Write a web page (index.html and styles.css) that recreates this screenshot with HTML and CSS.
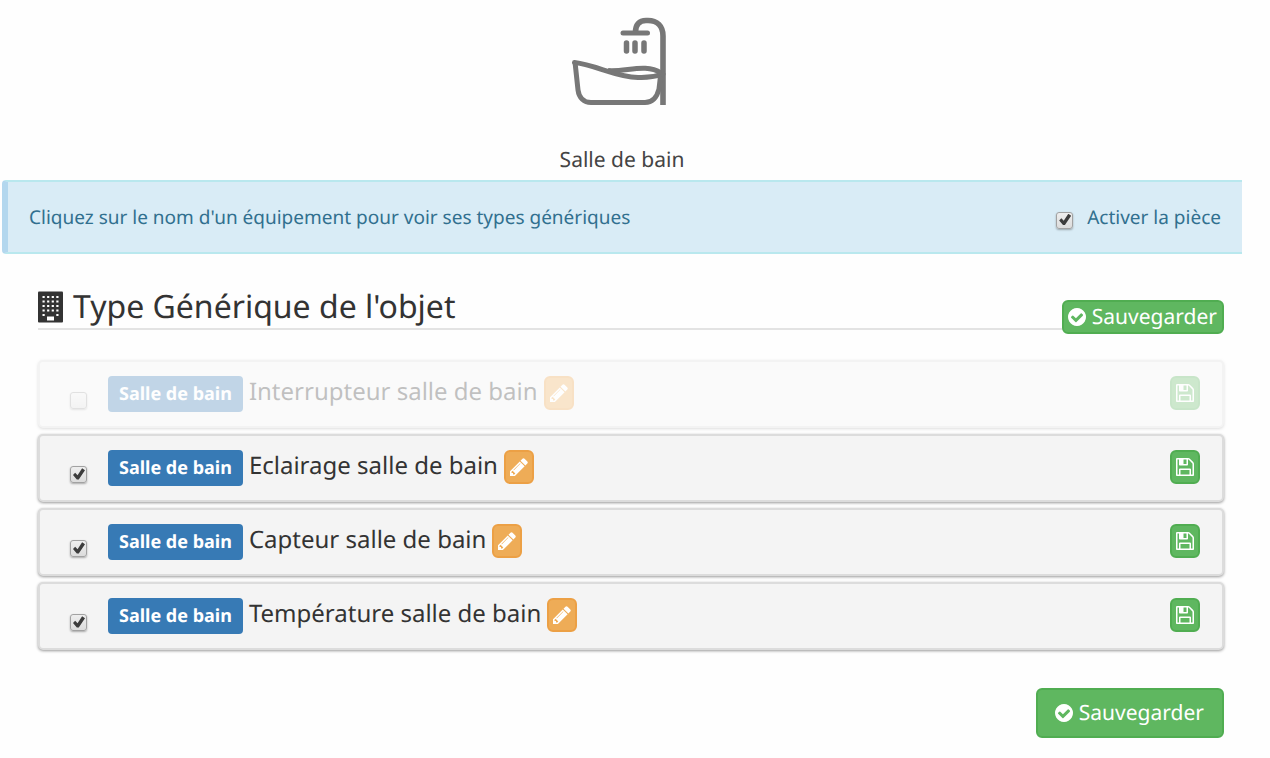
FILE: index.html
```html
<!DOCTYPE html>
<html lang="fr">
<head>
<meta charset="utf-8">
<title>Salle de bain</title>
<link rel="stylesheet" href="styles.css">
</head>
<body>
<svg class="sprite" aria-hidden="true">
  <symbol id="pencil" viewBox="0 128 1536 1536"><path d="M363 1536l91-91-235-235-91 91v107h128v128h107zM886 608q0-22-22-22-10 0-17 7l-542 542q-7 7-7 17 0 22 22 22 10 0 17-7l542-542q7-7 7-17zM832 416l416 416-832 832H0v-416zM1515 512q0 53-37 90l-166 166-416-416 166-165q36-38 90-38 53 0 91 38l235 234q37 39 37 91z"/></symbol>
  <symbol id="floppy" viewBox="0 128 1536 1536"><path d="M384 1536h768v-384H384v384zm896 0h128V640q0-14-10-38.500T1378 567l-281-281q-10-10-34-20t-39-10v416q0 40-28 68t-68 28H352q-40 0-68-28t-28-68V256H128v1280h128v-416q0-40 28-68t68-28h832q40 0 68 28t28 68v416zM896 608V288q0-13-9.500-22.500T864 256H672q-13 0-22.500 9.500T640 288v320q0 13 9.500 22.500T672 640h192q13 0 22.500-9.500T896 608zm640 32v928q0 40-28 68t-68 28H96q-40 0-68-28t-28-68V224q0-40 28-68t68-28h928q40 0 88 20t76 48l280 280q28 28 48 76t20 88z"/></symbol>
  <symbol id="check" viewBox="0 128 1536 1536"><path d="M1284 734q0-28-18-46l-91-90q-19-19-45-19t-45 19l-408 407-226-226q-19-19-45-19t-45 19l-91 90q-18 18-18 46 0 27 18 45l362 362q19 19 45 19 27 0 46-19l543-543q18-18 18-45zm252 162q0 209-103 385.500T1153.500 1561 768 1664t-385.500-103T103 1281.500 0 896t103-385.500T382.500 231 768 128t385.500 103T1433 510.500 1536 896z"/></symbol>
</svg>
<main class="page">
  <header class="room">
    <svg class="room-icon" viewBox="0 0 94 88" fill="none" stroke="#777" stroke-width="5" aria-hidden="true">
      <path d="M91 88V19C91 9 85 3.500 76 3.500H74C67 3.500 63.500 8 63.500 15" stroke-width="5.600"/>
      <path d="M51 16H75.500" stroke-linecap="round"/>
      <path d="M54.500 26v8M63 26v8M72 26v8" stroke-width="5.500" stroke-linecap="round"/>
      <path d="M2.500 45.500C24 48 44 60 66 60.500C75 61 82 60 91 57" stroke-linecap="round"/>
      <path d="M36 53.500C54 55 74 46 89 56"/>
      <path d="M3 45L6 73C7 81 12 85.500 19 85.500H73C81 85.500 85 80 87 72L88.500 59"/>
    </svg>
    <p class="room-name">Salle de bain</p>
  </header>

  <div class="notice">
    <span>Cliquez sur le nom d'un équipement pour voir ses types génériques</span>
    <label class="enable"><input type="checkbox" class="tick" checked> Activer la pièce</label>
  </div>

  <section class="content">
    <div class="heading">
      <h1 class="title">
        <svg class="building" viewBox="0 0 25 31" aria-hidden="true">
          <path fill="#333" d="M1 0h23a1 1 0 0 1 1 1v29a1 1 0 0 1-1 1H1a1 1 0 0 1-1-1V1a1 1 0 0 1 1-1z"/>
          <path stroke="#fff" stroke-width="2.200" stroke-dasharray="2.200 2.400" d="M4.500 5.500H21M4.500 10H21M4.500 14.500H21M4.500 19H21M4.500 23.500H21"/>
          <path fill="#333" d="M8 22h9v3H8z"/><path fill="#fff" d="M9 25h7v4H9z"/>
        </svg>
        Type Générique de l'objet
      </h1>
      <button type="button" class="save save-small"><svg class="glyph"><use href="#check"/></svg>Sauvegarder</button>
    </div>

    <ul class="devices">
      <li class="device device-off">
        <input type="checkbox" class="tick" aria-label="Interrupteur salle de bain">
        <span class="tag">Salle de bain</span>
        <span class="name">Interrupteur salle de bain</span>
        <button type="button" class="square edit" aria-label="Modifier"><svg class="glyph"><use href="#pencil"/></svg></button>
        <button type="button" class="square store" aria-label="Enregistrer"><svg class="glyph"><use href="#floppy"/></svg></button>
      </li>
      <li class="device">
        <input type="checkbox" class="tick" aria-label="Eclairage salle de bain" checked>
        <span class="tag">Salle de bain</span>
        <span class="name">Eclairage salle de bain</span>
        <button type="button" class="square edit" aria-label="Modifier"><svg class="glyph"><use href="#pencil"/></svg></button>
        <button type="button" class="square store" aria-label="Enregistrer"><svg class="glyph"><use href="#floppy"/></svg></button>
      </li>
      <li class="device">
        <input type="checkbox" class="tick" aria-label="Capteur salle de bain" checked>
        <span class="tag">Salle de bain</span>
        <span class="name">Capteur salle de bain</span>
        <button type="button" class="square edit" aria-label="Modifier"><svg class="glyph"><use href="#pencil"/></svg></button>
        <button type="button" class="square store" aria-label="Enregistrer"><svg class="glyph"><use href="#floppy"/></svg></button>
      </li>
      <li class="device">
        <input type="checkbox" class="tick" aria-label="Température salle de bain" checked>
        <span class="tag">Salle de bain</span>
        <span class="name">Température salle de bain</span>
        <button type="button" class="square edit" aria-label="Modifier"><svg class="glyph"><use href="#pencil"/></svg></button>
        <button type="button" class="square store" aria-label="Enregistrer"><svg class="glyph"><use href="#floppy"/></svg></button>
      </li>
    </ul>

    <div class="actions">
      <button type="button" class="save save-large"><svg class="glyph"><use href="#check"/></svg>Sauvegarder</button>
    </div>
  </section>
</main>
</body>
</html>
```
FILE: styles.css
```css
* { box-sizing: border-box; }

body {
  margin: 0;
  background: #fefefe;
  color: #333;
  font-family: "Noto Sans", sans-serif;
  text-rendering: geometricPrecision;
}

button { font-family: inherit; text-rendering: inherit; cursor: pointer; }

.sprite { display: none; }

.page { margin: 0 28px 0 2px; }

.room {
  display: flex;
  flex-direction: column;
  align-items: center;
  gap: 40px;
  padding: 17px 6px 4px 0;
}
.room-icon { width: 94px; height: 88px; }
.room-name { margin: 0 0 0 6px; color: #444; font-size: 21px; line-height: 31px; }

.notice {
  display: flex;
  justify-content: space-between;
  align-items: center;
  height: 74px;
  padding: 0 21px;
  border: solid #b9e8ee;
  border-width: 2px 0;
  border-left: 6px solid #b3d7ee;
  border-radius: 4px 0 0 4px;
  background: #d9ecf6;
  color: #31708f;
  font-size: 19px;
}
.enable { display: flex; align-items: center; gap: 14px; }
.enable .tick { margin-top: 6px; }

.tick {
  appearance: none;
  flex: none;
  width: 17px;
  height: 17px;
  margin: 0;
  border: 1px solid #a2a2a2;
  border-radius: 3px;
  background: linear-gradient(#eee, #dcdcdc);
  box-shadow: 0 1px 2px rgba(0, 0, 0, .3);
}
.tick:checked::before {
  content: "";
  display: block;
  width: 12px;
  height: 12px;
  margin: 1px 2px;
  background: #3c3c3c;
  clip-path: polygon(0 58%, 18% 40%, 38% 60%, 76% 2%, 100% 18%, 48% 96%, 32% 96%);
}

.content { padding: 32px 18px 0 36px; }

.heading {
  display: flex;
  justify-content: space-between;
  align-items: flex-end;
  border-bottom: 2px solid #e3e3e3;
}
.title {
  display: flex;
  align-items: center;
  gap: 10px;
  margin: 0;
  font-size: 32px;
  font-weight: 400;
  line-height: 42px;
}
.building { width: 25px; height: 32px; }

.glyph { width: 18px; height: 18px; fill: #fff; }

.save {
  display: flex;
  justify-content: center;
  align-items: center;
  gap: 6px;
  border: 2px solid #50ad51;
  border-radius: 6px;
  background: #5fb760;
  color: #fff;
  font-size: 21px;
}
.save-small { height: 34px; margin-bottom: -6px; padding: 0 5px 0 4px; }
.save-large { height: 50px; padding: 0 18px 0 17px; }

.devices {
  display: flex;
  flex-direction: column;
  gap: 6px;
  margin: 30px 0 0;
  padding: 0;
  list-style: none;
}
.device {
  display: flex;
  align-items: flex-start;
  padding: 14px 22px 14px 30px;
  border: 2px solid #dcdcdc;
  border-radius: 5px;
  background: #f4f4f4;
  box-shadow: 0 1px 3px rgba(0, 0, 0, .4);
}
.device-off { opacity: .3; }
.device .tick { margin: 16px 21px 0 0; }
.tag {
  height: 36px;
  padding: 0 11px;
  border-radius: 4px;
  background: #377ab5;
  color: #fff;
  font-size: 18px;
  font-weight: 700;
  line-height: 36px;
}
.name { margin: 0 6px; font-size: 24px; line-height: 31px; }
.square {
  display: flex;
  justify-content: center;
  align-items: center;
  width: 30px;
  height: 34px;
  padding: 0;
  border-radius: 6px;
}
.edit { border: 2px solid #eca045; background: #eeac57; }
.store { margin-left: auto; border: 2px solid #50ad51; background: #5fb760; }

.actions { display: flex; justify-content: flex-end; padding: 38px 0 20px; }
```
